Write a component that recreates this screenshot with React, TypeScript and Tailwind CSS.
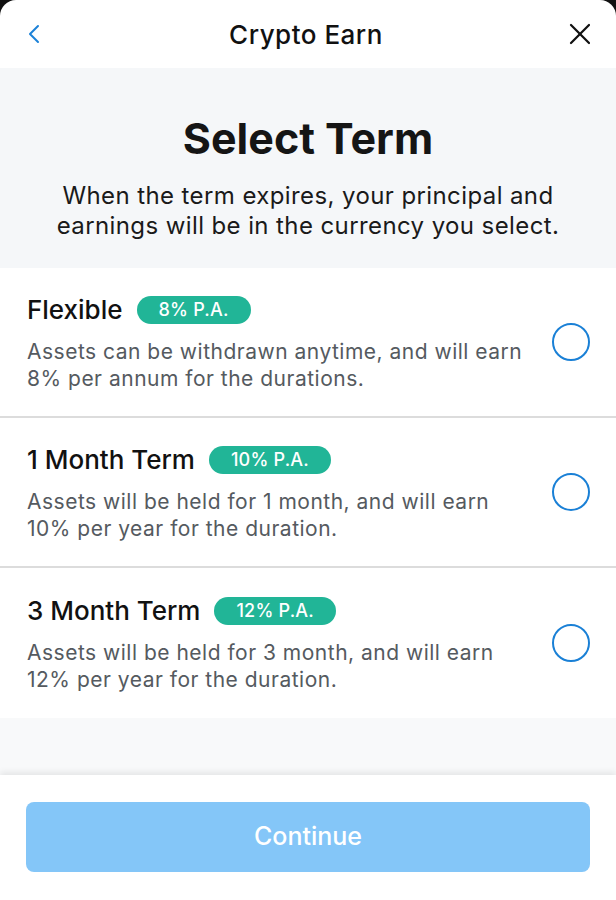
import { ChevronLeft, X } from 'lucide-react';

interface Term {
  title: string;
  rate: string;
  text: string[];
}

const terms: Term[] = [
  {
    title: 'Flexible',
    rate: '8% P.A.',
    text: ['Assets can be withdrawn anytime, and will earn', '8% per annum for the durations.'],
  },
  {
    title: '1 Month Term',
    rate: '10% P.A.',
    text: ['Assets will be held for 1 month, and will earn', '10% per year for the duration.'],
  },
  {
    title: '3 Month Term',
    rate: '12% P.A.',
    text: ['Assets will be held for 3 month, and will earn', '12% per year for the duration.'],
  },
];

function TermRow({ term, last }: { term: Term; last: boolean }) {
  return (
    <div
      className={`flex h-[150px] items-center justify-between pl-[27px] pr-[26px] ${
        last ? '' : 'border-b-2 border-[#dcdcdc]'
      }`}
    >
      <div className="flex flex-col">
        <div className="mt-[3px] flex items-center gap-[14px]">
          <span className="text-[26px] font-medium leading-none text-[#111]">{term.title}</span>
          <span className="rounded-full bg-[#21b597] px-[22px] py-[4px] text-[18px] font-medium leading-[20px] tracking-[0.2px] text-white">
            {term.rate}
          </span>
        </div>
        <p className="mt-[14px] text-[21px] leading-[27px] tracking-[0.5px] text-[#555a60]">
          {term.text[0]}
          <br />
          {term.text[1]}
        </p>
      </div>
      <span className="h-[38px] w-[38px] rounded-full border-[2.5px] border-[#1a80d6]" />
    </div>
  );
}

export default function App() {
  return (
    <div className="min-h-[900px] bg-[#111] font-['Inter',sans-serif]">
      <div className="flex h-[900px] flex-col overflow-hidden rounded-t-[16px] bg-white">
        {/* Header */}
        <header className="flex h-[68px] shrink-0 items-center justify-between px-[18px]">
          <ChevronLeft className="h-[32px] w-[32px] text-[#1c82d8]" strokeWidth={1.5} />
          <h1 className="text-[26px] font-medium tracking-[0.5px] text-[#111]">Crypto Earn</h1>
          <X className="h-[36px] w-[36px] text-[#111]" strokeWidth={1.5} />
        </header>

        {/* Intro */}
        <section className="flex h-[200px] shrink-0 flex-col items-center bg-[#f5f7f9] pt-[44px] text-center">
          <h2 className="text-[43px] font-bold leading-[52px] text-[#151515]">Select Term</h2>
          <p className="mt-[17px] text-[24px] leading-[30px] tracking-[0.4px] text-[#1a1a1a]">
            When the term expires, your principal and
            <br />
            earnings will be in the currency you select.
          </p>
        </section>

        {/* Terms */}
        <div className="shrink-0 bg-white">
          {terms.map((t, i) => (
            <TermRow key={t.title} term={t} last={i === terms.length - 1} />
          ))}
        </div>

        <div className="flex-1 bg-[#f8f9fa]" />

        {/* Footer */}
        <footer className="h-[125px] shrink-0 bg-white px-[26px] pt-[27px] shadow-[0_-3px_6px_rgba(0,0,0,0.08)]">
          <button className="flex h-[70px] w-full items-center justify-center rounded-[8px] bg-[#84c6f8] text-[25px] font-medium text-white">
            Continue
          </button>
        </footer>
      </div>
    </div>
  );
}
